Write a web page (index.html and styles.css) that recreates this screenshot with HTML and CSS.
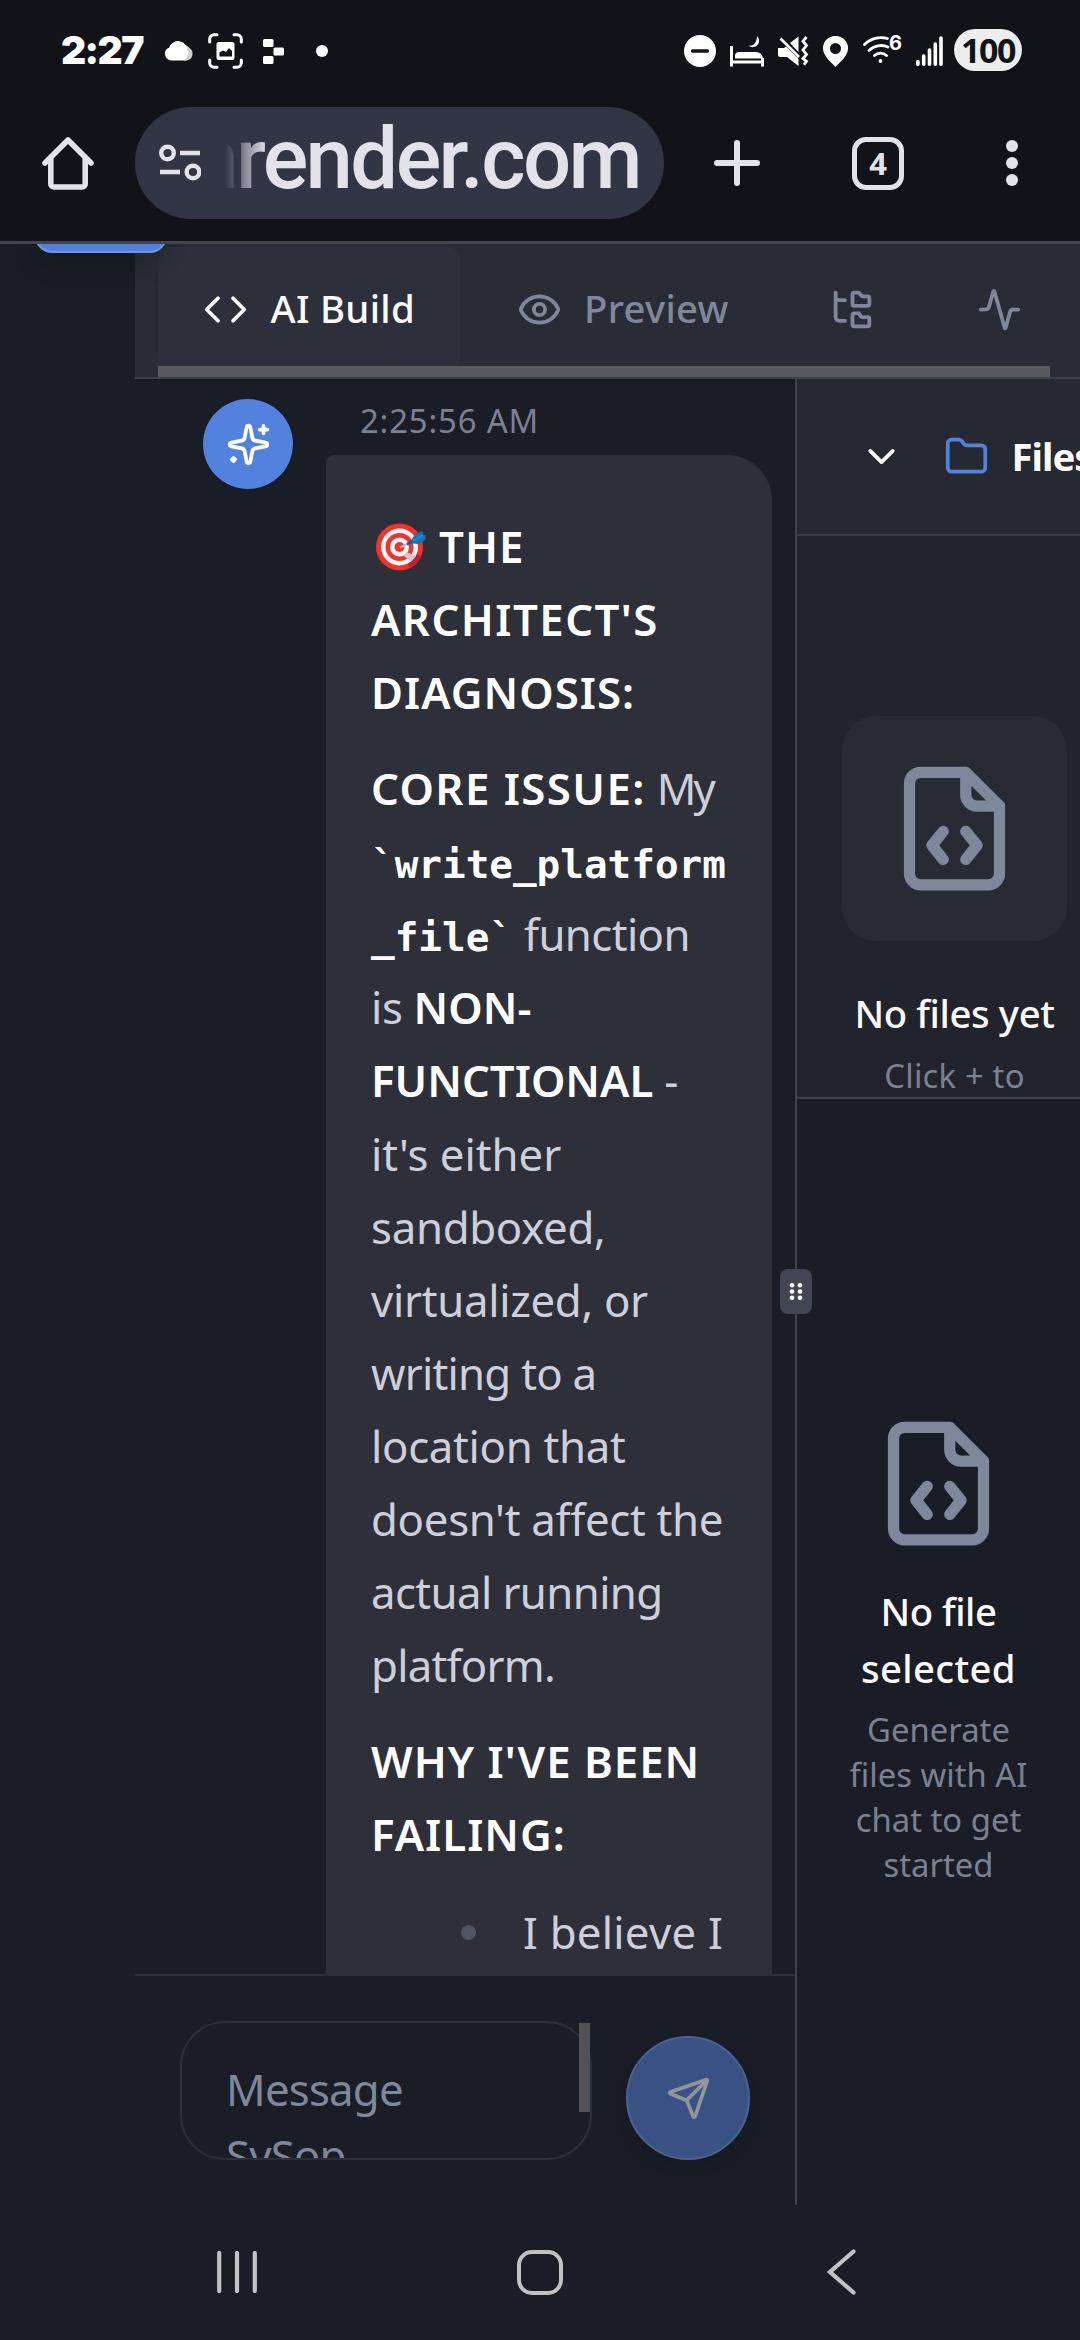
FILE: index.html
```html
<!DOCTYPE html>
<html lang="en">
<head>
<meta charset="utf-8">
<title>AI Build</title>
<link rel="stylesheet" href="styles.css">
</head>
<body>
<div class="screen">
  <header class="status">
    <span class="clock">2:27</span>
    <svg class="s-cloud" width="29" height="20" viewBox="0 0 29 20"><path d="M20 4a8 8 0 0 1 3 15h-6z" fill="#cfcfcf"/><path d="M22 19.5H7A6.8 6.800 0 0 1 5.300 6.400 9.300 9.300 0 0 1 23.400 9.500 5.800 5.800 0 0 1 22 19.500z" fill="#fff" stroke="none"/><path d="M24 6.500a6.700 6.700 0 0 1-1.500 13h-3c4-2 5.500-7 4.500-13z" fill="#cfcfcf"/></svg>
    <svg class="s-scan" width="35" height="36" viewBox="0 0 35 36" fill="none" stroke="#fff" stroke-width="3" stroke-linecap="round"><path d="M1.700 9V6a4.300 4.300 0 0 1 4.300-4.300h3M26 1.700h3A4.300 4.300 0 0 1 33.300 6v3M33.300 27v3a4.300 4.300 0 0 1-4.300 4.300h-3M9 34.300H6A4.300 4.300 0 0 1 1.700 30v-3"/><rect x="8.500" y="9" width="18" height="18" rx="2.500" fill="#fff" stroke="none"/><path d="M11.500 23.500v-4l3.500-2 3 1.500 3-4 3 3v5.500z" fill="#121318" stroke="none"/></svg>
    <svg class="s-blocks" width="21" height="25" viewBox="0 0 21 25" fill="#fff"><rect width="10.500" height="8" rx="1.500"/><rect x="10.500" y="8.500" width="10.500" height="8" rx="1.500"/><rect y="17" width="10.500" height="8" rx="1.500"/></svg>
    <i class="s-dot"></i>
    <div class="status-right">
      <svg width="32" height="32" viewBox="0 0 32 32"><circle cx="16" cy="16" r="16" fill="#fff"/><path d="M8.500 16h15" stroke="#121318" stroke-width="3.400" stroke-linecap="round"/></svg>
      <svg width="34" height="31" viewBox="0 0 34 31" fill="#fff"><path d="M0 10h3v14.500h28V22h3v8.500h-3v-3H3v3H0z"/><path d="M5 22.500V20a4 4 0 0 1 4-4h17a7 7 0 0 1 7 6v.5z"/><path d="M27 0a6 6 0 1 1-8.500 9.500c5 1 8.500-3 8.500-9.500z"/></svg>
      <svg width="31" height="30" viewBox="0 0 31 30"><path d="M0 12h6l5-4 9.500 15v7L9 21H2a2 2 0 0 1-2-2zM12 7l8.500-6.500V17z" fill="#fff"/><path d="M3 2l18 18" stroke="#121318" stroke-width="5"/><path d="M2.500 2.500L21 21" stroke="#fff" stroke-width="2.600"/><path d="M28.500 1l-3.500 4.200 3.500 4.400-3.500 4.400 3.500 4.400-3.500 4.200 3.500 2.700-2.500 3.500" fill="none" stroke="#fff" stroke-width="2.800"/></svg>
      <svg width="25" height="31" viewBox="0 0 25 31"><path d="M12.500 0A12.300 12.300 0 0 1 25 12.500C25 20 17 26 12.500 31 8 26 0 20 0 12.500A12.300 12.300 0 0 1 12.500 0zm0 7a5.500 5.500 0 1 0 0 11 5.500 5.500 0 0 0 0-11z" fill="#fff" fill-rule="evenodd"/></svg>
      <span class="wifi"><svg width="38" height="30" viewBox="0 0 38 30" fill="none" stroke="#fff" stroke-width="2.800" stroke-linecap="round"><path d="M1.500 8.500a24 24 0 0 1 23-6M6 14.500a17 17 0 0 1 19-3.500M11.500 19.500a9 9 0 0 1 12 0"/><circle cx="17.500" cy="25" r="1.900" fill="#fff" stroke="none"/></svg><b>6</b></span>
      <svg width="27" height="30" viewBox="0 0 27 30" stroke="#fff" stroke-width="3.600" stroke-linecap="round"><path d="M1.900 25.500v2.700M7.700 20v8.200M13.500 14v14.200M19.300 8v20.200M25 2v26.200"/></svg>
      <span class="battery">100</span>
    </div>
  </header>

  <nav class="browser">
    <svg class="b-home" width="52" height="54" viewBox="0 0 52 54" fill="none" stroke="#e2e3e9" stroke-width="5.600" stroke-linejoin="round" stroke-linecap="round"><path d="M3 27L26 4l23 23M8.800 23v25a3 3 0 0 0 3 3h28.400a3 3 0 0 0 3-3V23"/></svg>
    <div class="omnibox">
      <svg width="42" height="38" viewBox="0 0 42 38" fill="none" stroke="#e2e3e9" stroke-width="4.400"><circle cx="8.500" cy="9" r="6.300"/><path d="M21 9h20M1 28h20"/><circle cx="34" cy="28" r="6.300"/></svg>
      <span class="url">onrender.com</span>
    </div>
    <svg class="b-plus" width="46" height="46" viewBox="0 0 46 46" stroke="#e2e3e9" stroke-width="6" stroke-linecap="round"><path d="M23 3v40M3 23h40"/></svg>
    <span class="b-tabs">4</span>
    <svg class="b-menu" width="12" height="48" viewBox="0 0 12 48" fill="#e2e3e9"><circle cx="6" cy="7" r="6"/><circle cx="6" cy="24" r="6"/><circle cx="6" cy="41" r="6"/></svg>
  </nav>

  <main class="page">
    <div class="floating"></div>
    <aside class="gutter"></aside>
    <section class="workspace">
      <div class="tabs">
        <div class="tab active">
          <svg class="icon" viewBox="0 0 24 24"><path d="m16 18 6-6-6-6M8 6l-6 6 6 6"/></svg>
          <span>AI Build</span>
        </div>
        <div class="tab">
          <svg class="icon" viewBox="0 0 24 24"><path d="M2.062 12.348a1 1 0 0 1 0-.696 10.750 10.750 0 0 1 19.876 0 1 1 0 0 1 0 .696 10.750 10.750 0 0 1-19.876 0"/><circle cx="12" cy="12" r="3"/></svg>
          <span>Preview</span>
        </div>
        <div class="tab small">
          <svg class="icon" viewBox="0 0 24 24"><path d="M20 10a1 1 0 0 0 1-1V6a1 1 0 0 0-1-1h-2.500a1 1 0 0 1-.8-.4l-.9-1.200A1 1 0 0 0 15 3h-2a1 1 0 0 0-1 1v5a1 1 0 0 0 1 1Z"/><path d="M20 21a1 1 0 0 0 1-1v-3a1 1 0 0 0-1-1h-2.900a1 1 0 0 1-.88-.55l-.42-.85a1 1 0 0 0-.92-.6H13a1 1 0 0 0-1 1v5a1 1 0 0 0 1 1Z"/><path d="M3 5a2 2 0 0 0 2 2h3M3 3v13a2 2 0 0 0 2 2h3"/></svg>
        </div>
        <div class="tab small">
          <svg class="icon" viewBox="0 0 24 24"><path d="M22 12h-2.480a2 2 0 0 0-1.930 1.460l-2.350 8.360a.25.25 0 0 1-.48 0L9.240 2.180a.25.25 0 0 0-.48 0l-2.350 8.360A2 2 0 0 1 4.490 12H2"/></svg>
        </div>
        <div class="tabs-scroll"></div>
      </div>

      <div class="panes">
        <div class="chat">
          <div class="messages">
            <div class="avatar">
              <svg class="icon" viewBox="0 0 24 24"><path d="M11.017 2.814a1 1 0 0 1 1.966 0l1.051 5.558a2 2 0 0 0 1.594 1.594l5.558 1.051a1 1 0 0 1 0 1.966l-5.558 1.051a2 2 0 0 0-1.594 1.594l-1.051 5.558a1 1 0 0 1-1.966 0l-1.051-5.558a2 2 0 0 0-1.594-1.594l-5.558-1.051a1 1 0 0 1 0-1.966l5.558-1.051a2 2 0 0 0 1.594-1.594z"/><path d="M20 2v4M22 4h-4"/><path d="M4 18.800L5.200 20 4 21.200 2.800 20z" fill="currentColor" stroke-width="1.400"/></svg>
            </div>
            <div class="message">
              <div class="time">2:25:56 AM</div>
              <div class="bubble">
                <p><strong><svg class="target" viewBox="0 0 50 48"><circle cx="23.500" cy="24" r="23.500" fill="#fb2f2a"/><path d="M23.500 24L45 33.500a23.500 23.500 0 0 1-11 12z" fill="#c41f36"/><circle cx="23.500" cy="24" r="18.500" fill="#fff"/><circle cx="23.500" cy="24" r="14" fill="#fb2f2a"/><circle cx="23.500" cy="24" r="9.500" fill="#fff"/><circle cx="23.500" cy="24" r="5" fill="#fb2f2a"/><path d="M27.500 32.500l3-3.500 9.500 4-5.500 5.500z" fill="#d9c4cb"/><path d="M24 24.500L33 20" stroke="#b9bcc4" stroke-width="2.200"/><path d="M31 21.500L40 16" stroke="#0b62a8" stroke-width="3"/><path d="M36 16l3-5 8-3-.5 4.500 3.500-.5-1 5-6 4-7-.5z" fill="#1275bd"/><path d="M37 17.500L47 12" stroke="#3a95d8" stroke-width="1.200"/></svg>THE<br><span class="w3">ARCHITECT'S</span><br>DIAGNOSIS:</strong></p>
                <p><strong class="w3">CORE ISSUE:</strong> <span class="n4">My</span><br><code>`write_platform</code><br><code>_file`</code> <span class="n2">function</span><br>is <strong class="w0">NON-</strong><br><strong class="w0">FUNCTIONAL</strong> -<br><span class="n0">it's either</span><br><span class="n1">sandboxed,</span><br><span class="n1">virtualized, or</span><br><span class="n3">writing to a</span><br><span class="n1">location that</span><br><span class="n1">doesn't affect the</span><br><span class="n2">actual running</span><br><span class="n3">platform.</span></p>
                <p><strong>WHY I'VE BEEN<br>FAILING:</strong></p>
                <ul><li><i class="bullet"></i><span>I believe I</span></li></ul>
              </div>
            </div>
          </div>
          <div class="composer">
            <div class="field">
              <div class="input">Message<br>SySop</div>
              <div class="input-scroll"></div>
            </div>
            <div class="send"><svg class="icon" viewBox="0 0 24 24"><path d="M14.536 21.686a.5.5 0 0 0 .937-.024l6.500-19a.496.496 0 0 0-.635-.635l-19 6.500a.5.5 0 0 0-.024.937l7.930 3.180a2 2 0 0 1 1.112 1.110z"/><path d="m21.854 2.147-10.940 10.939"/></svg></div>
          </div>
        </div>
        <div class="divider"><span class="handle"><svg width="14" height="17" viewBox="0 0 14 17" fill="#fff"><circle cx="3" cy="2.300" r="2.300"/><circle cx="11" cy="2.300" r="2.300"/><circle cx="3" cy="8.500" r="2.300"/><circle cx="11" cy="8.500" r="2.300"/><circle cx="3" cy="14.700" r="2.300"/><circle cx="11" cy="14.700" r="2.300"/></svg></span></div>
        <div class="files">
          <div class="files-head">
            <svg class="icon" viewBox="0 0 24 24"><path d="m6 9 6 6 6-6"/></svg>
            <svg class="icon folder" viewBox="0 0 24 24"><path d="M20 20a2 2 0 0 0 2-2V8a2 2 0 0 0-2-2h-7.900a2 2 0 0 1-1.690-.9L9.600 3.900A2 2 0 0 0 7.930 3H4a2 2 0 0 0-2 2v13a2 2 0 0 0 2 2Z"/></svg>
            <span>Files</span>
          </div>
          <div class="files-body">
            <div class="file-box"><svg class="big-icon" viewBox="0 0 24 24"><path d="M6 22a2 2 0 0 1-2-2V4a2 2 0 0 1 2-2h8l6 6v12a2 2 0 0 1-2 2z"/><path d="M14 2v4a2 2 0 0 0 2 2h4M10 12.500 8 15l2 2.500M14 12.500l2 2.500-2 2.500"/></svg></div>
            <div class="title tight">No files yet</div>
            <div class="hint">Click + to</div>
          </div>
          <div class="editor">
            <svg class="big-icon" viewBox="0 0 24 24"><path d="M6 22a2 2 0 0 1-2-2V4a2 2 0 0 1 2-2h8l6 6v12a2 2 0 0 1-2 2z"/><path d="M14 2v4a2 2 0 0 0 2 2h4M10 12.500 8 15l2 2.500M14 12.500l2 2.500-2 2.500"/></svg>
            <div class="title"><span class="t-first">No file</span><br>selected</div>
            <div class="hint">Generate<br>files with AI<br>chat to get<br>started</div>
          </div>
        </div>
      </div>
    </section>
  </main>

  <footer class="system-nav">
    <svg width="40" height="42" viewBox="0 0 40 42" stroke="#c1c2c4" stroke-width="4.200" stroke-linecap="round"><path d="M2.200 2v38M20 2v38M37.800 2v38"/></svg>
    <i class="nav-home"></i>
    <svg width="29" height="46" viewBox="0 0 29 46" fill="none" stroke="#c1c2c4" stroke-width="4.200" stroke-linecap="round"><path d="M26.500 2.500L3 23l23.500 20.500"/></svg>
  </footer>
</div>
</body>
</html>
```
FILE: styles.css
```css
* { box-sizing: border-box; }
body { margin: 0; background: #191d25; }
svg { display: block; flex: none; }

.screen {
  width: 1080px;
  height: 2340px;
  display: flex;
  flex-direction: column;
  overflow: hidden;
  background: #191d25;
  color: #cdd0da;
  font-family: "Noto Sans", sans-serif;
}

/* Status bar */
.status {
  height: 102px;
  flex: none;
  display: flex;
  align-items: center;
  padding: 0 58px 0 61px;
  background: #121318;
  color: #fff;
}
.clock {
  width: 82px;
  font: 900 39px/46px Inter, sans-serif;
  letter-spacing: -1.600px;
  padding-bottom: 3px;
}
.s-cloud { margin-left: 21px; }
.s-scan { margin-left: 15px; }
.s-blocks { margin-left: 20px; }
.s-dot { width: 12px; height: 12px; border-radius: 50%; background: #fff; margin-left: 32px; }
.status-right { margin-left: auto; display: flex; align-items: center; gap: 14px; }
.wifi { display: flex; position: relative; width: 38px; margin: 0 1px; }
.wifi b { position: absolute; left: 26px; top: -3px; font: 700 20px/20px Inter, sans-serif; }
.battery {
  width: 68px;
  height: 42px;
  margin-left: -3px;
  margin-top: -2px;
  border-radius: 21px;
  background: #ededed;
  color: #121318;
  text-align: center;
  font: 700 34px/43px "Noto Sans", sans-serif;
  letter-spacing: -1.5px;
}

/* Browser toolbar */
.browser {
  height: 142px;
  flex: none;
  display: flex;
  align-items: flex-start;
  padding: 5px 0 0 42px;
  background: #121318;
  border-bottom: 3px solid #43464f;
}
.b-home { margin-top: 29px; }
.omnibox {
  width: 529px;
  height: 112px;
  margin-left: 41px;
  padding: 0 24px;
  border-radius: 56px;
  display: flex;
  align-items: center;
  background: #313645;
}
.url {
  width: 417px;
  height: 112px;
  margin-left: 24px;
  display: flex;
  justify-content: flex-end;
  overflow: hidden;
  color: #e2e3e9;
  font: 500 85px/104px Roboto, sans-serif;
  letter-spacing: -2.600px;
  -webkit-mask-image: linear-gradient(90deg, transparent 0, #000 42px);
  mask-image: linear-gradient(90deg, transparent 0, #000 42px);
}
.b-plus { margin: 33px 0 0 50px; }
.b-tabs {
  width: 52px;
  height: 53px;
  margin: 30px 0 0 92px;
  border: 5.500px solid #e2e3e9;
  border-radius: 14px;
  color: #e2e3e9;
  text-align: center;
  font: 700 31px/42px "Noto Sans", sans-serif;
}
.b-menu { margin: 32px 0 0 102px; }

/* Page */
.page { position: relative; height: 1961px; flex: none; display: flex; }
.floating {
  position: absolute;
  z-index: 2;
  left: 35px;
  top: -60px;
  width: 132px;
  height: 69px;
  border: 2px solid #7096e2;
  border-radius: 17px;
  background: #5280de;
  box-shadow: 0 12px 24px rgba(0, 0, 0, .14);
  clip-path: inset(60px -40px -50px -40px);
}
.gutter { width: 135px; flex: none; }
.workspace { width: 945px; display: flex; flex-direction: column; overflow: hidden; }
.icon {
  width: 45px;
  height: 45px;
  fill: none;
  stroke: currentColor;
  stroke-width: 2;
  stroke-linecap: round;
  stroke-linejoin: round;
}

.tabs {
  position: relative;
  height: 135px;
  flex: none;
  display: flex;
  gap: 11.500px;
  padding: 3px 0 0 23px;
  background: #282c34;
  border-bottom: 2px solid #3b404b;
}
.tab {
  width: 302px;
  height: 124px;
  flex: none;
  display: flex;
  align-items: center;
  gap: 22.500px;
  padding: 0 45px;
  color: #7f889b;
  font-size: 38.300px;
  font-weight: 500;
  line-height: 54px;
  letter-spacing: .3px;
  white-space: nowrap;
}
.tab span { padding-bottom: 2px; }
.tab.small { width: 135px; }
.tab.active { background: #2c303a; color: #fafafa; border-radius: 12px; }
.tabs-scroll { position: absolute; left: 23px; bottom: 0; width: 892px; height: 11px; background: #58595d; }

.panes { height: 1826px; display: flex; }
.chat { width: 660px; flex: none; display: flex; flex-direction: column; }
.messages {
  height: 1595px;
  flex: none;
  display: flex;
  overflow: hidden;
  padding: 19px 23px 0 68px;
}
.avatar {
  width: 90px;
  height: 90px;
  margin: 1px 33px 0 0;
  flex: none;
  border-radius: 50%;
  display: flex;
  align-items: center;
  justify-content: center;
  background: #5282de;
  color: #fff;
}
.message { width: 446px; flex: none; }
.time {
  padding-left: 34px;
  margin-bottom: 12px;
  color: #7a8292;
  font-size: 32.800px;
  line-height: 45px;
  letter-spacing: .85px;
}
.bubble {
  height: 1700px;
  padding: 55px 0 0 45px;
  border-radius: 8px 45px 45px 45px;
  background: #2d3039;
  font-size: 43.750px;
  line-height: 73.125px;
  letter-spacing: -.35px;
  white-space: nowrap;
}
.bubble p { margin: 0 0 22.500px; }
.bubble strong { color: #fff; font-weight: 600; letter-spacing: 1px; }
.bubble code {
  color: #fff;
  font: 700 39.300px/0 "DejaVu Sans Mono", monospace;
  letter-spacing: 0;
}
.bubble .w3 { letter-spacing: 1.450px; }
.bubble .w0 { letter-spacing: 0; }
.n0 { letter-spacing: 0; }
.n1 { letter-spacing: -.3px; }
.n2 { letter-spacing: -.6px; }
.n3 { letter-spacing: -.750px; }
.n4 { letter-spacing: -3px; }
.target { display: inline-block; width: 50px; height: 48px; margin: 0 13px 0 5px; vertical-align: -8px; }
.bubble ul { margin: 25px 0 0; padding: 0; list-style: none; letter-spacing: .25px; }
.bubble li { display: flex; align-items: center; padding-left: 90px; }
.bullet { width: 15px; height: 15px; margin-right: 47px; border-radius: 50%; background: #4e5664; }

.composer {
  height: 231px;
  display: flex;
  align-items: flex-start;
  padding: 45px 0 0 45px;
  border-top: 2px solid #2b2f39;
}
.field { position: relative; width: 412px; height: 139px; flex: none; }
.input {
  height: 139px;
  overflow: hidden;
  padding: 33px 44px 0;
  border: 2px solid #2b2f39;
  border-radius: 45px;
  color: #7f879a;
  font-size: 43.750px;
  line-height: 66px;
  letter-spacing: -.8px;
}
.input-scroll { position: absolute; right: 2px; top: 2px; width: 11px; height: 89px; background: #505256; }
.send {
  width: 124px;
  height: 124px;
  margin: 15px 0 0 34px;
  display: flex;
  align-items: center;
  justify-content: center;
  border: 2px solid #4c6293;
  border-radius: 50%;
  background: #3a5183;
  color: #919498;
  box-shadow: 0 8px 14px rgba(0, 0, 0, .07);
}

.divider { position: relative; z-index: 1; width: 2px; flex: none; background: #3d424d; }
.handle {
  position: absolute;
  left: -15px;
  top: 890px;
  width: 32px;
  height: 45px;
  border-radius: 8px;
  display: flex;
  align-items: center;
  justify-content: center;
  background: #404652;
}

.files { width: 283px; flex: none; display: flex; flex-direction: column; overflow: hidden; }
.files-head {
  height: 157px;
  flex: none;
  display: flex;
  align-items: center;
  padding-left: 62px;
  background: #252931;
  border-bottom: 2px solid #373c47;
  color: #fafafa;
  font-size: 38.300px;
  font-weight: 700;
  line-height: 54px;
  letter-spacing: -1px;
}
.files-head .folder { margin: 0 23px 0 39.500px; color: #5282de; }
.files-head span { padding-bottom: 2px; }
.files-body {
  height: 563px;
  flex: none;
  display: flex;
  flex-direction: column;
  align-items: center;
  width: 315px;
  padding-top: 180px;
  background: #21242c;
  border-bottom: 2px solid #3d424d;
}
.file-box {
  width: 225px;
  height: 225px;
  flex: none;
  border-radius: 34px;
  display: flex;
  align-items: center;
  justify-content: center;
  background: #272b33;
}
.big-icon {
  width: 135px;
  height: 135px;
  fill: none;
  stroke: #7f879a;
  stroke-width: 2;
  stroke-linecap: round;
  stroke-linejoin: round;
}
.title {
  color: #fafafa;
  font-size: 38.300px;
  font-weight: 500;
  line-height: 57px;
  letter-spacing: .35px;
  text-align: center;
  white-space: nowrap;
}
.t-first { letter-spacing: -.5px; }
.hint {
  color: #7a8292;
  font-size: 32.800px;
  line-height: 45px;
  text-align: center;
  white-space: nowrap;
}
.files-body .title { margin: 44px 0 11px; letter-spacing: -.4px; }
.files-body .hint { letter-spacing: .2px; }
.editor { flex: 1; display: flex; flex-direction: column; align-items: center; padding-top: 317px; }
.editor .title { margin: 32px 0 10px; }

/* System navigation */
.system-nav {
  height: 135px;
  display: flex;
  align-items: center;
  justify-content: space-between;
  padding: 0 224px 1px 217px;
}
.nav-home { width: 46px; height: 45px; border: 4.500px solid #c1c2c4; border-radius: 15px; margin-right: 4px; }
```
